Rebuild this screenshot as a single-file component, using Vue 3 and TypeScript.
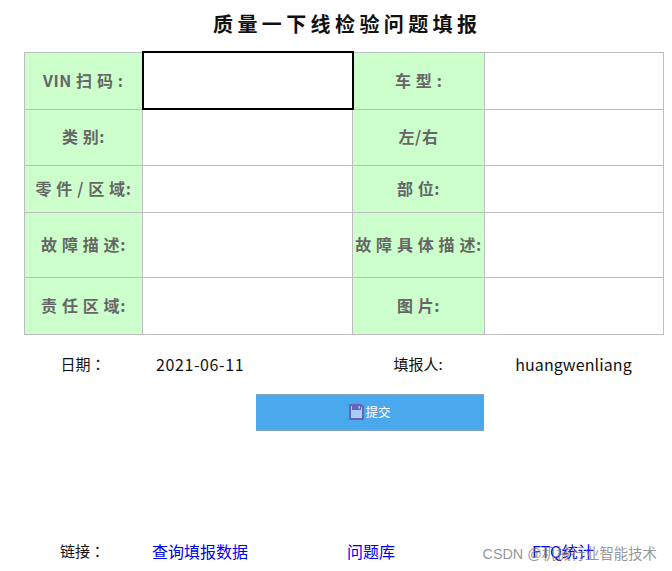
<script setup lang="ts">
interface Row { a: string; b: string; h: number; sel?: boolean }
const rows: Row[] = [
  { a: 'VIN 扫 码 :', b: '车 型 :', h: 57, sel: true },
  { a: '类 别:', b: '左/右', h: 56 },
  { a: '零 件 / 区 域:', b: '部 位:', h: 47 },
  { a: '故 障 描 述:', b: '故 障 具 体 描 述:', h: 65 },
  { a: '责 任 区 域:', b: '图 片:', h: 57 },
]
</script>

<template>
  <main class="page">
    <h1 class="title">质量一下线检验问题填报</h1>
    <table class="form">
      <colgroup>
        <col class="c1" /><col class="c2" /><col class="c3" /><col class="c4" />
      </colgroup>
      <tbody>
        <tr v-for="r in rows" :key="r.a" :style="{ height: r.h + 'px' }">
          <th>{{ r.a }}</th>
          <td :class="{ sel: r.sel }"></td>
          <th>{{ r.b }}</th>
          <td></td>
        </tr>
      </tbody>
    </table>
    <div class="meta">
      <span class="m1">日期：</span>
      <span class="m2">2021-06-11</span>
      <span class="m3">填报人:</span>
      <span class="m4">huangwenliang</span>
    </div>
    <div class="actions">
      <button class="submit" type="button">
        <svg width="15" height="16" viewBox="0 0 15 16" aria-hidden="true">
          <path d="M1 1h11l2 2v12H1z" fill="#a9cdf3" stroke="#6a62b8" stroke-width="2" />
          <rect x="3" y="1" width="9" height="5" fill="#6a62b8" />
          <rect x="9.5" y="2" width="1.5" height="2.5" fill="#a9cdf3" />
        </svg>
        <span>提交</span>
      </button>
    </div>
    <div class="links">
      <span class="l1">链接：</span>
      <a href="#">查询填报数据</a>
      <a href="#">问题库</a>
      <a href="#">FTQ统计</a>
      <span class="wm">CSDN @机械行业智能技术</span>
    </div>
  </main>
</template>

<style scoped>
.page {
  width: 672px;
  height: 571px;
  position: relative;
  overflow: hidden;
  background: #fff;
  font-family: "Noto Sans CJK SC", "Noto Sans", sans-serif;
  color: #111;
}
.title {
  margin: 0;
  height: 51px;
  padding: 10px 0 0 213px;
  box-sizing: border-box;
  font-size: 20px;
  line-height: 28px;
  font-weight: 700;
  letter-spacing: 4.4px;
  color: #111;
  white-space: nowrap;
}
.form {
  margin-left: 24px;
  width: 639px;
  table-layout: fixed;
  border-collapse: collapse;
}
.c1 { width: 118px; }
.c2 { width: 210px; }
.c3 { width: 132px; }
.c4 { width: 179px; }
.form th,
.form td {
  border: 1px solid #bdbdbd;
  padding: 0;
}
.form th {
  background: #ccffcc;
  color: #666;
  font-size: 16px;
  font-weight: 700;
  letter-spacing: 0.6px;
  text-align: center;
  white-space: nowrap;
  padding-bottom: 2px;
}
.form td {
  background: #fff;
}
.form td.sel {
  border: 2px solid #000;
}
.meta {
  display: grid;
  grid-template-columns: 118px 210px 132px 179px;
  margin: 18px 0 0 24px;
  font-size: 15px;
  line-height: 22px;
  text-align: center;
}
.m1,
.l1 {
  font-family: "Noto Sans CJK TC", sans-serif;
}
.m2 {
  text-align: left;
  padding-left: 14px;
  font-size: 16px;
  letter-spacing: 0.6px;
}
.m4 {
  font-size: 16px;
  letter-spacing: 0.1px;
}
.actions {
  margin-top: 19px;
  padding-left: 256px;
}
.submit {
  width: 228px;
  height: 37px;
  box-sizing: border-box;
  display: flex;
  align-items: center;
  justify-content: center;
  gap: 1px;
  background: #4aa8ec;
  border: 0;
  border-top: 1px solid #7fa8c8;
  border-bottom: 1px solid #7fa8c8;
  padding: 0;
  color: #fff;
  font: 12.5px/16px "Noto Sans CJK SC", sans-serif;
}
.links {
  display: grid;
  grid-template-columns: 128px 195px 185px auto;
  margin: 109px 0 0 24px;
  font-size: 15px;
  line-height: 22px;
}
.l1 {
  padding-left: 36px;
}
.links a {
  color: #0000ee;
  text-decoration: none;
  font-size: 16px;
}
.wm {
  position: absolute;
  right: 15px;
  bottom: 8px;
  color: rgba(130, 130, 130, 0.85);
  font-family: "Liberation Sans", "Noto Sans CJK SC", sans-serif;
  font-size: 14.4px;
  line-height: 18px;
  white-space: nowrap;
}
</style>
